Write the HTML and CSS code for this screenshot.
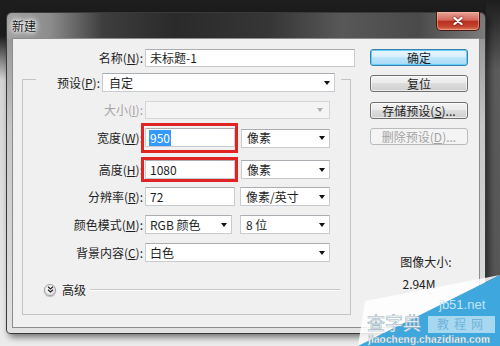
FILE: index.html
```html
<!DOCTYPE html>
<html lang="zh-CN">

<head>
  <meta charset="UTF-8" />
  <title>新建</title>
  <link rel="stylesheet" href="styles.css">
</head>

<body>
  <div class="desk">
    <div class="win">
      <div class="titlebar">
        <span class="title">新建</span>
        <span class="close">
          <svg width="10" height="8" viewBox="0 0 10 8"><path d="M1.5 1 L8.5 7 M8.5 1 L1.5 7" stroke="#fff" stroke-width="2.2" stroke-linecap="round" /></svg>
        </span>
      </div>
      <div class="client">
        <div class="form">
          <div class="row name-row">
            <span class="lbl">名称(<u>N</u>):</span>
            <div class="field name">未标题-1</div>
          </div>
          <fieldset class="group">
            <legend class="preset">
              <span class="lbl">预设(<u>P</u>):</span>
              <div class="field combo preset-box">自定</div>
            </legend>
            <div class="row size-row">
              <span class="lbl off">大小(<u>I</u>):</span>
              <div class="field combo off wide"></div>
            </div>
            <div class="row w-row">
              <span class="lbl">宽度(<u>W</u>):</span>
              <div class="redbox tall">
                <div class="field num"><span class="sel">950</span></div>
              </div>
              <div class="field combo unit">像素</div>
            </div>
            <div class="row h-row">
              <span class="lbl">高度(<u>H</u>):</span>
              <div class="redbox">
                <div class="field num">1080</div>
              </div>
              <div class="field combo unit">像素</div>
            </div>
            <div class="row res-row">
              <span class="lbl">分辨率(<u>R</u>):</span>
              <div class="field num">72</div>
              <div class="field combo unit2">像素/英寸</div>
            </div>
            <div class="row mode-row">
              <span class="lbl">颜色模式(<u>M</u>):</span>
              <div class="field combo mode">RGB 颜色</div>
              <div class="field combo unit3">8 位</div>
            </div>
            <div class="row bg-row">
              <span class="lbl">背景内容(<u>C</u>):</span>
              <div class="field combo wide">白色</div>
            </div>
            <div class="adv">
              <span class="adv-btn">
                <svg width="7" height="7" viewBox="0 0 7 7"><path d="M1 0.8 L3.5 3 L6 0.8 M1 3.8 L3.5 6 L6 3.8" fill="none" stroke="#222" stroke-width="1.2" /></svg>
              </span>
              <span class="adv-txt">高级</span>
              <span class="adv-line"></span>
            </div>
          </fieldset>
        </div>
        <div class="side">
          <div class="btn def">确定</div>
          <div class="btn">复位</div>
          <div class="btn">存储预设(<u>S</u>)...</div>
          <div class="btn off">删除预设(<u>D</u>)...</div>
          <div class="imgsize">
            <div class="is-lbl">图像大小:</div>
            <div class="is-val">2.94M</div>
          </div>
        </div>
      </div>
    </div>

    <svg class="mark" width="145" height="74" viewBox="0 0 145 74">
      <polygon points="10,29 145,3 3,74" fill="#fff" fill-opacity="0.85" />
      <polygon points="3,74 145,3 145,74" fill="#3ea8de" />
      <rect x="73" y="44" width="67" height="17" fill="#fff" fill-opacity="0.55" />
      <text x="84" y="37" class="m-jb">jb51.net</text>
      <text x="12" y="58" class="m-czd">查字典</text>
      <text x="82" y="57" class="m-jc">教程网</text>
      <text x="13" y="71" class="m-url" textLength="122">jiaocheng.chazidian.com</text>
    </svg>
  </div>
</body>

</html>
```

FILE: styles.css
```css
body {
  margin: 0;
  background: #1d1d1d;
  font-family: "Noto Sans CJK SC", sans-serif;
  font-size: 12px;
  color: #1e1e1e;
}

.desk {
  position: relative;
  width: 500px;
  height: 346px;
  overflow: hidden;
  background:
    linear-gradient(to bottom, #1d1d1d 0, #5c5c5c 70px, #555 100%) right top / 14px 100% no-repeat,
    linear-gradient(to bottom, #1d1d1d 0, #1d1d1d 36px, #d6d6d6 80px, #ececec 100%);
  padding-top: 12px;
  box-sizing: border-box;
}

/* Window frame */
.win {
  box-sizing: border-box;
  width: 480px;
  height: 322px;
  margin-left: 6px;
  padding: 0 5px 5px 5px;
  border: 1px solid #3a3a3a;
  border-radius: 6px 6px 4px 4px;
  background:
    linear-gradient(to right, #a2a2a2 0, #8c8c8c 9%, #3e3e3e 20%, #2a2a2a 35%, #363636 55%, #585858 70%, #4a4a4a 86%, #7c7c7c 100%) top / 100% 26px no-repeat,
    linear-gradient(to bottom, #8a8a8a 0, #c6c6c6 35%, #e2e2e2 100%);
  box-shadow: 3px 3px 7px rgba(0, 0, 0, 0.55);
}

.titlebar {
  display: flex;
  align-items: flex-start;
  height: 25px;
}

.title {
  margin-top: 5px;
  color: #1a1a1a;
  line-height: 16px;
  text-shadow: 0 0 6px #fff, 0 0 6px #fff, 0 0 3px #fff;
}

.close {
  margin-left: auto;
  margin-top: -1px;
  width: 44px;
  height: 19px;
  box-sizing: border-box;
  border: 1px solid #4a1710;
  border-top: none;
  border-radius: 0 0 5px 5px;
  background: linear-gradient(#e8a497, #d2685a 45%, #b8311f 52%, #c4432f 80%, #dc7a5e);
  box-shadow: inset 0 0 0 1px rgba(255, 190, 170, 0.5);
  display: flex;
  align-items: center;
  justify-content: center;
}

.close svg {
  filter: drop-shadow(0 0 1px #4a1010);
}

/* Client area */
.client {
  box-sizing: border-box;
  height: 290px;
  border: 1px solid #8c8c8c;
  background: #f0f0f0;
  display: flex;
}

.form {
  width: 357px;
  padding-top: 10px;
}

.row {
  display: flex;
  align-items: center;
}

.lbl {
  flex: none;
  width: 120px;
  margin-right: 2px;
  text-align: right;
  line-height: 16px;
  white-space: nowrap;
}

.lbl.off {
  color: #a3a3a3;
}

.name-row .lbl {
  width: 130px;
}

.field {
  box-sizing: border-box;
  flex: none;
  height: 19px;
  display: flex;
  align-items: center;
  padding: 0 4px 0 4px;
  background: #fff;
  border: 1px solid #c9cbd0;
  border-top-color: #abadb3;
  line-height: 16px;
  white-space: nowrap;
}

.combo::after {
  content: "";
  margin-left: auto;
  border-left: 3.5px solid transparent;
  border-right: 3.5px solid transparent;
  border-top: 4px solid #111;
}

.combo.off {
  background: #f4f4f4;
  border-color: #d5d5d5;
}

.combo.off::after {
  border-top-color: #b0b0b0;
  margin-right: 2px;
}

.name {
  width: 210px;
  height: 18px;
}

/* Group box with the preset row as its legend */
.group {
  box-sizing: border-box;
  width: 329px;
  min-width: 0;
  margin: 0 0 0 9px;
  padding: 0 0 18px 0;
  border: 1px solid #c3c3c3;
}

.preset {
  display: flex;
  align-items: center;
  margin-left: 13px;
  padding: 6px 6px 0 0;
}

.preset .lbl {
  width: 64px;
}

.preset-box {
  width: 233px;
  padding-left: 6px;
}

.size-row {
  margin-top: 9px;
  height: 18px;
}

.size-row .field {
  height: 18px;
}

.wide {
  width: 185px;
}

.redbox {
  flex: none;
  margin-left: -4px;
  padding: 0 0 0 1px;
  border: 3px solid #e02424;
}

.redbox.tall {
  padding-top: 2px;
  padding-bottom: 3px;
}

.w-row {
  margin-top: 4px;
}

.h-row {
  margin-top: 4px;
}

.num {
  width: 90px;
}

.sel {
  background: #3399ff;
  color: #fff;
  padding: 0 1px;
  margin-left: -1px;
}

.unit {
  width: 89px;
  margin-left: 3px;
  padding-left: 5px;
}

.res-row {
  margin-top: 5px;
}

.unit2 {
  width: 90px;
  margin-left: 5px;
  padding-left: 5px;
}

.mode-row {
  margin-top: 9px;
}

.mode {
  width: 87px;
}

.unit3 {
  width: 90px;
  margin-left: 8px;
  padding-left: 5px;
}

.bg-row {
  margin-top: 9px;
}

.adv {
  display: flex;
  align-items: center;
  margin-top: 21px;
  height: 13px;
}

.adv-btn {
  box-sizing: border-box;
  width: 12px;
  height: 12px;
  margin-left: 21px;
  border: 1px solid #a0a0a0;
  border-radius: 50%;
  background: radial-gradient(circle at 40% 35%, #fff, #dcdcdc);
  box-shadow: 0 1px 1px rgba(0, 0, 0, 0.25);
  display: flex;
  align-items: center;
  justify-content: center;
}

.adv-txt {
  margin-left: 6px;
  line-height: 16px;
}

.adv-line {
  flex: 1;
  margin: 0 10px 0 4px;
  border-top: 1px solid #c8c8c8;
  border-bottom: 1px solid #fff;
}

/* Right column */
.side {
  width: 98px;
  padding-top: 10px;
  display: flex;
  flex-direction: column;
  gap: 9.3px;
}

.btn {
  box-sizing: border-box;
  height: 17px;
  border: 1px solid #707070;
  border-radius: 3px;
  background: linear-gradient(#f3f3f3 0, #ebebeb 45%, #dddddd 50%, #cfcfcf 100%);
  text-align: center;
  line-height: 15px;
  box-shadow: inset 0 0 0 1px rgba(255, 255, 255, 0.6);
}

.btn.def {
  border-color: #3c7fb1;
  background: linear-gradient(#eaf6fd 0, #d9f0fc 45%, #bee6fd 50%, #a7d9f5 100%);
  box-shadow: inset 0 0 0 1px #64d0f8;
}

.btn.off {
  color: #a3a3a3;
  border-color: #b8bcbf;
  background: #f4f4f4;
  box-shadow: none;
}

.imgsize {
  margin-top: 100px;
  text-align: center;
  line-height: 16px;
  color: #222;
}

.is-lbl {
  padding-left: 14px;
}

.is-val {
  margin-top: 6px;
}

/* Watermark overlay */
.mark {
  position: absolute;
  left: 355px;
  top: 272px;
}

.m-jb {
  font-family: "Liberation Sans", sans-serif;
  font-size: 13px;
  fill: #c4e4f5;
}

.m-czd {
  font-family: "Noto Sans CJK SC", sans-serif;
  font-size: 18px;
  fill: #fff;
  stroke: #9ab4c2;
  stroke-width: 0.6;
}

.m-jc {
  font-family: "Noto Sans CJK SC", sans-serif;
  font-size: 12px;
  letter-spacing: 5px;
  fill: #6fb3d8;
}

.m-url {
  font-family: "Liberation Sans", sans-serif;
  font-size: 10px;
  font-weight: bold;
  fill: #fff;
  stroke: #7a98a8;
  stroke-width: 0.3;
}
```
